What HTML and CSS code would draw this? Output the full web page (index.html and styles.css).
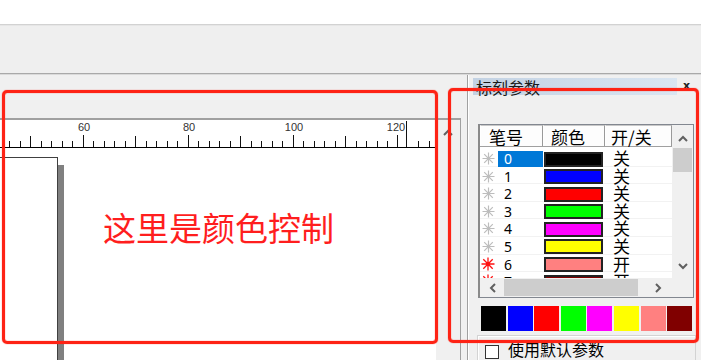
FILE: index.html
```html
<!DOCTYPE html>
<html lang="zh-CN">
<head>
<meta charset="utf-8">
<title>标刻参数</title>
<link rel="stylesheet" href="styles.css">
</head>
<body>
<svg class="defs" width="0" height="0" aria-hidden="true">
  <symbol id="star" viewBox="0 0 13 13">
    <path d="M6.5 0.5V12.5M0.5 6.5H12.5M2.2 2.2L10.8 10.8M10.8 2.2L2.2 10.8" stroke="currentColor" stroke-width="1.2" fill="none"/>
  </symbol>
  <symbol id="star-on" viewBox="0 0 14 14">
    <path d="M7 0.5V13.5M0.5 7H13.5M2.3 2.3L11.7 11.7M11.7 2.3L2.3 11.7" stroke="currentColor" stroke-width="1.3" fill="none"/>
    <circle cx="7" cy="7" r="2.2" fill="currentColor"/>
  </symbol>
  <symbol id="chev-up" viewBox="0 0 10 7"><polyline points="1,6 5,2 9,6" fill="none" stroke="currentColor" stroke-width="2"/></symbol>
  <symbol id="chev-down" viewBox="0 0 10 7"><polyline points="1,1 5,5 9,1" fill="none" stroke="currentColor" stroke-width="2"/></symbol>
  <symbol id="chev-left" viewBox="0 0 7 10"><polyline points="6,1 2,5 6,9" fill="none" stroke="currentColor" stroke-width="2"/></symbol>
  <symbol id="chev-right" viewBox="0 0 7 10"><polyline points="1,1 5,5 1,9" fill="none" stroke="currentColor" stroke-width="2"/></symbol>
</svg>
<div class="app">
  <div class="topbar"></div>
  <div class="toolbar"></div>
  <div class="main">
    <div class="workspace">
      <div class="ws-top"></div>
      <div class="frame">
        <div class="canvas-col">
          <div class="ruler">
            <svg class="ruler-svg" width="436" height="27" viewBox="0 0 436 27">
              <path class="ticks" d="M9.5 21V27M20.5 21V27M41.5 21V27M51.5 21V27M62.5 21V27M72.5 21V27M93.5 21V27M104.5 21V27M114.5 21V27M125.5 21V27M146.5 21V27M156.5 21V27M167.5 21V27M177.5 21V27M198.5 21V27M209.5 21V27M219.5 21V27M230.5 21V27M251.5 21V27M261.5 21V27M272.5 21V27M282.5 21V27M303.5 21V27M314.5 21V27M324.5 21V27M335.5 21V27M356.5 21V27M366.5 21V27M377.5 21V27M387.5 21V27M418.5 21V27M429.5 21V27M30.5 16V27M135.5 16V27M240.5 16V27M345.5 16V27M83.5 15V27M188.5 15V27M293.5 15V27M397.5 15V27M406.5 1V27"/>
              <text x="84" y="11">60</text>
              <text x="189" y="11">80</text>
              <text x="294" y="11">100</text>
              <text x="396" y="11">120</text>
            </svg>
          </div>
          <div class="canvas">
            <div class="page"></div>
          </div>
        </div>
        <div class="ws-vscroll">
          <svg class="chev chev-ud"><use href="#chev-up"/></svg>
        </div>
      </div>
    </div>
    <div class="panel">
      <div class="panel-head">
        <div class="panel-title">标刻参数</div>
        <span class="close">x</span>
      </div>
      <div class="lv">
        <div class="lv-content">
          <div class="lv-header">
            <div class="hc hc1">笔号</div>
            <div class="hc hc2">颜色</div>
            <div class="hc hc3">开/关</div>
          </div>
          <div class="lv-rows">
            <div class="row">
              <div class="cell c1"><svg class="star off"><use href="#star"/></svg><span class="num selected">0</span></div>
              <div class="cell c2"><span class="swatch" style="background:#000000"></span></div>
              <div class="cell c3">关</div>
            </div>
            <div class="row">
              <div class="cell c1"><svg class="star off"><use href="#star"/></svg><span class="num">1</span></div>
              <div class="cell c2"><span class="swatch" style="background:#0000ff"></span></div>
              <div class="cell c3">关</div>
            </div>
            <div class="row">
              <div class="cell c1"><svg class="star off"><use href="#star"/></svg><span class="num">2</span></div>
              <div class="cell c2"><span class="swatch" style="background:#ff0000"></span></div>
              <div class="cell c3">关</div>
            </div>
            <div class="row">
              <div class="cell c1"><svg class="star off"><use href="#star"/></svg><span class="num">3</span></div>
              <div class="cell c2"><span class="swatch" style="background:#00ff00"></span></div>
              <div class="cell c3">关</div>
            </div>
            <div class="row">
              <div class="cell c1"><svg class="star off"><use href="#star"/></svg><span class="num">4</span></div>
              <div class="cell c2"><span class="swatch" style="background:#ff00ff"></span></div>
              <div class="cell c3">关</div>
            </div>
            <div class="row">
              <div class="cell c1"><svg class="star off"><use href="#star"/></svg><span class="num">5</span></div>
              <div class="cell c2"><span class="swatch" style="background:#ffff00"></span></div>
              <div class="cell c3">关</div>
            </div>
            <div class="row">
              <div class="cell c1"><svg class="star on"><use href="#star-on"/></svg><span class="num">6</span></div>
              <div class="cell c2"><span class="swatch" style="background:#ff8080"></span></div>
              <div class="cell c3">开</div>
            </div>
            <div class="row">
              <div class="cell c1"><svg class="star on"><use href="#star-on"/></svg><span class="num">7</span></div>
              <div class="cell c2"><span class="swatch" style="background:#800000"></span></div>
              <div class="cell c3">开</div>
            </div>
          </div>
        </div>
        <div class="lv-vscroll">
          <div class="sb-btn sb-up"><svg class="chev chev-ud"><use href="#chev-up"/></svg></div>
          <div class="sb-thumb-v"></div>
          <div class="sb-btn sb-down"><svg class="chev chev-ud"><use href="#chev-down"/></svg></div>
        </div>
        <div class="lv-hscroll">
          <div class="sb-btn sb-left"><svg class="chev chev-lr"><use href="#chev-left"/></svg></div>
          <div class="sb-thumb-h"></div>
          <div class="sb-btn sb-right"><svg class="chev chev-lr"><use href="#chev-right"/></svg></div>
        </div>
        <div class="lv-corner"></div>
      </div>
      <div class="palette">
        <span class="pal" style="background:#000000"></span>
        <span class="pal" style="background:#0000ff"></span>
        <span class="pal" style="background:#ff0000"></span>
        <span class="pal" style="background:#00ff00"></span>
        <span class="pal" style="background:#ff00ff"></span>
        <span class="pal" style="background:#ffff00"></span>
        <span class="pal" style="background:#ff8080"></span>
        <span class="pal" style="background:#800000"></span>
      </div>
      <div class="group">
        <label class="check"><span class="box"></span><span class="check-text">使用默认参数</span></label>
      </div>
    </div>
  </div>
  <div class="note">这里是颜色控制</div>
  <div class="mark mark-a"></div>
  <div class="mark mark-b"></div>
</div>
</body>
</html>
```

FILE: styles.css
```css
* { box-sizing: border-box; margin: 0; padding: 0; }

html, body {
  width: 701px;
  height: 360px;
  overflow: hidden;
  background: #f0f0f0;
}

body {
  font-family: "Noto Sans CJK SC", "Noto Sans", sans-serif;
  color: #000;
}

.defs { position: absolute; width: 0; height: 0; }

.app {
  position: relative;
  width: 701px;
  height: 360px;
  display: flex;
  flex-direction: column;
}

.topbar {
  height: 25px;
  background: #fff;
  border-bottom: 1px solid #d2d2d2;
  flex: none;
}

.toolbar {
  height: 49px;
  background: #efefef;
  border-top: 1px solid #e6e6e6;
  border-bottom: 1px solid #a9a9a9;
  flex: none;
}

.main {
  flex: 1;
  display: flex;
  border-top: 1px solid #dadada;
  min-height: 0;
}

/* ---------- workspace ---------- */
.workspace {
  width: 461px;
  flex: none;
  display: flex;
  flex-direction: column;
}

.ws-top { height: 43px; flex: none; }

.frame {
  flex: 1;
  display: flex;
  border-top: 2px solid #a0a0a0;
  border-right: 1px solid #a0a0a0;
  min-height: 0;
}

.canvas-col {
  width: 436px;
  flex: none;
  display: flex;
  flex-direction: column;
}

.ruler {
  height: 28px;
  flex: none;
  background: #fff;
  border-bottom: 1px solid #000;
}

.ruler-svg { display: block; }

.ticks {
  stroke: #111;
  stroke-width: 1;
  shape-rendering: crispEdges;
}

.ruler-svg text {
  font-family: "Liberation Sans", Arial, sans-serif;
  font-size: 11px;
  fill: #333;
  text-anchor: middle;
}

.canvas {
  flex: 1;
  background: #fff;
  overflow: hidden;
}

.page {
  width: 58px;
  height: 400px;
  margin-top: 9px;
  background: #fff;
  border-top: 1px solid #404040;
  border-right: 1px solid #404040;
  box-shadow: 6px 8px 0 #808080;
}

.ws-vscroll {
  flex: 1;
  background: #f0f0f0;
  display: flex;
  justify-content: center;
  padding-top: 9px;
}

.chev { color: #606060; display: block; }
.chev-ud { width: 10px; height: 7px; }
.chev-lr { width: 7px; height: 10px; }

/* ---------- panel ---------- */
.panel {
  flex: 1;
  margin-left: 6px;
  border-left: 1px solid #a0a0a0;
  box-shadow: inset 1px 0 0 #fff;
  display: flex;
  flex-direction: column;
  min-width: 0;
}

.panel-head {
  display: flex;
  align-items: flex-start;
  padding-top: 3px;
  padding-left: 5px;
  height: 20px;
  flex: none;
}

.panel-title {
  width: 204px;
  height: 17px;
  background: linear-gradient(to right, #c3d2e3, #dae6f2);
  font-size: 16px;
  line-height: 18px;
  padding-left: 3px;
  color: #1a1a1a;
  white-space: nowrap;
}

.close {
  margin-left: 6px;
  font-family: "DejaVu Sans", sans-serif;
  font-weight: bold;
  font-size: 11px;
  line-height: 12px;
  margin-top: 2px;
  color: #222;
}

.lv {
  margin-top: 29px;
  margin-left: 10px;
  width: 216px;
  height: 174px;
  flex: none;
  border: 1px solid #828790;
  border-left: 2px solid #8a8a8a;
  display: grid;
  grid-template-columns: 192px 21px;
  grid-template-rows: 153px 19px;
  background: #fff;
}

.lv-content {
  grid-column: 1;
  grid-row: 1;
  overflow: hidden;
  background: #fff;
}

.lv-header {
  display: flex;
  height: 22px;
  border-bottom: 1px solid #a0a0a0;
}

.hc {
  height: 21px;
  font-size: 17px;
  line-height: 21px;
  padding-left: 7px;
  background: #fdfdfd;
  border-top: 1px solid #c8c8c8;
  border-left: 1px solid #fff;
  border-right: 1px solid #9a9a9a;
  white-space: nowrap;
}

.hc1 { width: 63px; padding-left: 8px; }
.hc2 { width: 62px; }
.hc3 { flex: 1; padding-left: 5px; }

.lv-rows { padding-top: 2px; }

.row {
  height: 17.6px;
  display: flex;
  align-items: flex-start;
  box-shadow: inset 0 -1px 0 #f2f2f2;
}

.cell { height: 100%; }

.c1 {
  width: 63px;
  display: flex;
  align-items: flex-start;
}

.star {
  margin-left: 2px;
  margin-top: 3px;
  width: 13px;
  height: 13px;
  flex: none;
}

.star.off { color: #bdbdbd; }
.star.on { color: #ff1010; width: 14px; height: 14px; margin-top: 2px; margin-left: 1px; }

.num {
  margin-left: 3px;
  margin-top: 2px;
  width: 45px;
  height: 16px;
  padding-left: 6px;
  font-family: "Noto Sans", sans-serif;
  font-size: 14px;
  line-height: 16px;
}

.num.selected {
  background: #0078d7;
  color: #fff;
}

.c2 { width: 62px; }

.swatch {
  display: block;
  margin-left: 1px;
  margin-top: 2.5px;
  width: 59px;
  height: 15px;
  border: 2px solid #222;
}

.c3 {
  flex: 1;
  padding-left: 8px;
  font-size: 17px;
  line-height: 17.6px;
  white-space: nowrap;
}

.lv-vscroll {
  grid-column: 2;
  grid-row: 1;
  background: #f0f0f0;
  display: flex;
  flex-direction: column;
  align-items: center;
}

.sb-btn {
  display: flex;
  align-items: center;
  justify-content: center;
  flex: none;
}

.sb-up { height: 23px; width: 100%; padding-top: 3px; }
.sb-down { height: 25px; width: 100%; margin-top: auto; padding-top: 1px; }

.sb-thumb-v {
  width: 19px;
  height: 24px;
  background: #cdcdcd;
}

.lv-hscroll {
  grid-column: 1;
  grid-row: 2;
  background: #f0f0f0;
  display: flex;
  align-items: center;
}

.sb-left { width: 24px; height: 100%; padding-left: 1px; }
.sb-right { width: 24px; height: 100%; margin-left: auto; padding-right: 3px; }

.sb-thumb-h {
  width: 134px;
  height: 17px;
  background: #cdcdcd;
}

.lv-corner {
  grid-column: 2;
  grid-row: 2;
  background: #f0f0f0;
}

.palette {
  display: flex;
  gap: 1.6px;
  margin-top: 8px;
  margin-left: 13px;
  height: 25px;
  flex: none;
}

.pal {
  width: 25px;
  height: 25px;
  flex: none;
}

.group {
  margin-top: 4px;
  margin-left: 9px;
  width: 219px;
  flex: 1;
  border: 1px solid #d3d3d3;
  border-bottom: none;
  box-shadow: inset 1px 1px 0 #fff;
  padding-left: 7px;
}

.check {
  display: flex;
  align-items: flex-start;
}

.box {
  width: 14px;
  height: 14px;
  margin-top: 9px;
  background: #fff;
  border: 1px solid #333;
  flex: none;
}

.check-text {
  margin-left: 9px;
  margin-top: 4px;
  font-size: 16px;
  line-height: 18px;
  white-space: nowrap;
}

/* ---------- annotations ---------- */
.note {
  position: absolute;
  left: 103px;
  top: 211px;
  font-size: 33px;
  line-height: 33px;
  color: #ff1e1e;
  white-space: nowrap;
}

.mark {
  position: absolute;
  border: 3px solid #fe2315;
  border-radius: 5px;
  box-shadow: 0 0 1px #fe2315, inset 0 0 1px #fe2315;
}

.mark-a { left: 2px; top: 90px; width: 436px; height: 254px; }
.mark-b { left: 448px; top: 88px; width: 251px; height: 255px; }
```
